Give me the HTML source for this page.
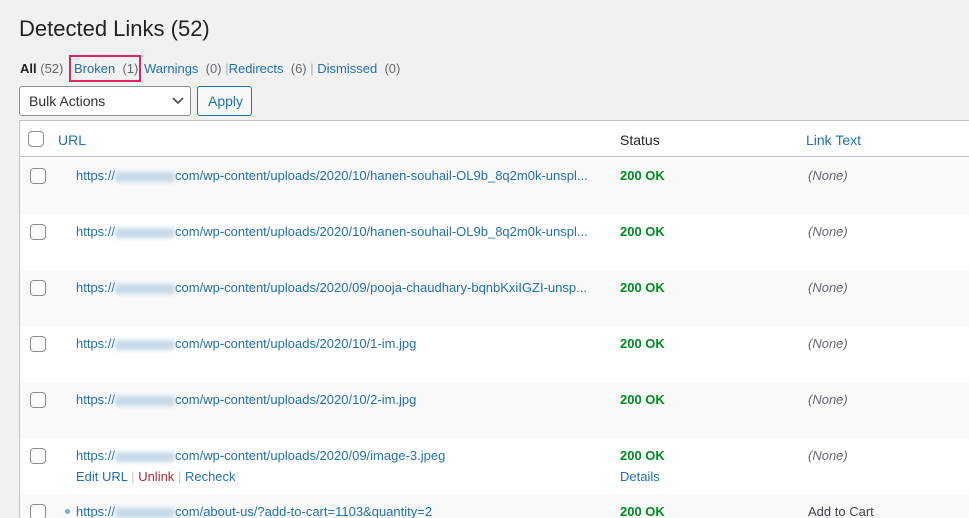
<!DOCTYPE html>
<html><head><meta charset="utf-8"><style>
*{margin:0;padding:0;box-sizing:border-box}
html,body{width:969px;height:518px;overflow:hidden}
body{background:#f1f1f1;font-family:"Liberation Sans",sans-serif;font-size:13px;color:#3c434a;position:relative}
a{color:#2271b1;text-decoration:none}
.abs{position:absolute;white-space:nowrap}
h1{position:absolute;left:19px;top:16px;font-size:22px;font-weight:400;color:#1d2327}
.tbl{position:absolute;left:19px;top:120px;width:960px;height:398px;background:#fff;border:1px solid #c3c4c7;border-right:none;border-bottom:none}
.hdr{position:absolute;left:0;top:0;width:100%;height:36px;border-bottom:1px solid #c3c4c7;background:#fff}
.row{position:absolute;left:0;width:100%;height:56px}
.g{background:#f9f9f9}
.cb{position:absolute;width:16px;height:16px;border:1px solid #8c8f94;border-radius:4px;background:#fff}
.blur{display:inline-block;width:60px;height:10px;background:#c5d9e8;filter:blur(2px);vertical-align:middle;border-radius:3px}
.ok{color:#008a20;font-weight:bold}
.none{color:#646970;font-style:italic}
</style></head><body>
<h1>Detected Links (52)</h1>
<div class="abs" style="left:20px;top:61px"><b style="color:#1d2327;font-weight:600">All</b> <span style="color:#646970">(52)</span></div>
<div class="abs" style="left:69px;top:55px;width:72px;height:27px;border:2px solid #e0245e"></div>
<div class="abs" style="left:74px;top:61px"><a>Broken</a> <span style="color:#646970">&nbsp;(1)</span></div>
<div class="abs" style="left:144px;top:61px"><a>Warnings</a> <span style="color:#646970">&nbsp;(0)</span> <span style="color:#a7aaad">|</span><a>Redirects</a> <span style="color:#646970">&nbsp;(6)</span> <span style="color:#a7aaad">|</span> <a>Dismissed</a> <span style="color:#646970">&nbsp;(0)</span></div>
<div class="abs" style="left:19px;top:86px;width:172px;height:30px;border:1px solid #8c8f94;border-radius:3px;background:#fff;padding:6px 0 0 9px;font-size:14px;color:#2c3338">Bulk Actions
<svg style="position:absolute;right:6px;top:10px" width="12" height="8" viewBox="0 0 12 8"><path d="M1 1l5 5 5-5" stroke="#50575e" stroke-width="1.8" fill="none"/></svg></div>
<div class="abs" style="left:197px;top:86px;width:55px;height:30px;border:1px solid #2271b1;border-radius:3px;background:#f6f7f7;padding:6px 0 0 10px;font-size:14px;color:#2271b1">Apply</div>
<div class="tbl">
<div class="hdr"><div class="cb" style="left:8px;top:10px"></div><a class="abs" style="left:38px;top:11px;font-size:14px">URL</a><span class="abs" style="left:600px;top:11px;font-size:14px;color:#1d2327">Status</span><a class="abs" style="left:786px;top:11px;font-size:14px">Link Text</a></div>
<div class="row g" style="top:37px"><div class="cb" style="left:10px;top:10px"></div><a class="abs" style="left:56px;top:10px">https://<span class="blur"></span>com/wp-content/uploads/2020/10/hanen-souhail-OL9b_8q2m0k-unspl...</a><span class="abs ok" style="left:600px;top:10px">200 OK</span><span class="abs none" style="left:788px;top:10px">(None)</span></div>
<div class="row" style="top:93px"><div class="cb" style="left:10px;top:10px"></div><a class="abs" style="left:56px;top:10px">https://<span class="blur"></span>com/wp-content/uploads/2020/10/hanen-souhail-OL9b_8q2m0k-unspl...</a><span class="abs ok" style="left:600px;top:10px">200 OK</span><span class="abs none" style="left:788px;top:10px">(None)</span></div>
<div class="row g" style="top:149px"><div class="cb" style="left:10px;top:10px"></div><a class="abs" style="left:56px;top:10px">https://<span class="blur"></span>com/wp-content/uploads/2020/09/pooja-chaudhary-bqnbKxiIGZI-unsp...</a><span class="abs ok" style="left:600px;top:10px">200 OK</span><span class="abs none" style="left:788px;top:10px">(None)</span></div>
<div class="row" style="top:205px"><div class="cb" style="left:10px;top:10px"></div><a class="abs" style="left:56px;top:10px">https://<span class="blur"></span>com/wp-content/uploads/2020/10/1-im.jpg</a><span class="abs ok" style="left:600px;top:10px">200 OK</span><span class="abs none" style="left:788px;top:10px">(None)</span></div>
<div class="row g" style="top:261px"><div class="cb" style="left:10px;top:10px"></div><a class="abs" style="left:56px;top:10px">https://<span class="blur"></span>com/wp-content/uploads/2020/10/2-im.jpg</a><span class="abs ok" style="left:600px;top:10px">200 OK</span><span class="abs none" style="left:788px;top:10px">(None)</span></div>
<div class="row" style="top:317px"><div class="cb" style="left:10px;top:10px"></div><a class="abs" style="left:56px;top:10px">https://<span class="blur"></span>com/wp-content/uploads/2020/09/image-3.jpeg</a>
<div class="abs" style="left:56px;top:31px"><a>Edit URL</a> <span style="color:#c3c4c7">|</span> <a style="color:#b32d2e">Unlink</a> <span style="color:#c3c4c7">|</span> <a>Recheck</a></div>
<span class="abs ok" style="left:600px;top:10px">200 OK</span><a class="abs" style="left:600px;top:31px">Details</a><span class="abs none" style="left:788px;top:10px">(None)</span></div>
<div class="row g" style="top:373px"><div class="cb" style="left:10px;top:10px"></div><span class="abs" style="left:45px;top:15px;width:5px;height:5px;border-radius:50%;background:#72aee6"></span><a class="abs" style="left:56px;top:10px">https://<span class="blur"></span>com/about-us/?add-to-cart=1103&amp;quantity=2</a><span class="abs ok" style="left:600px;top:10px">200 OK</span><span class="abs" style="left:788px;top:10px">Add to Cart</span></div>
</div>
</body></html>
